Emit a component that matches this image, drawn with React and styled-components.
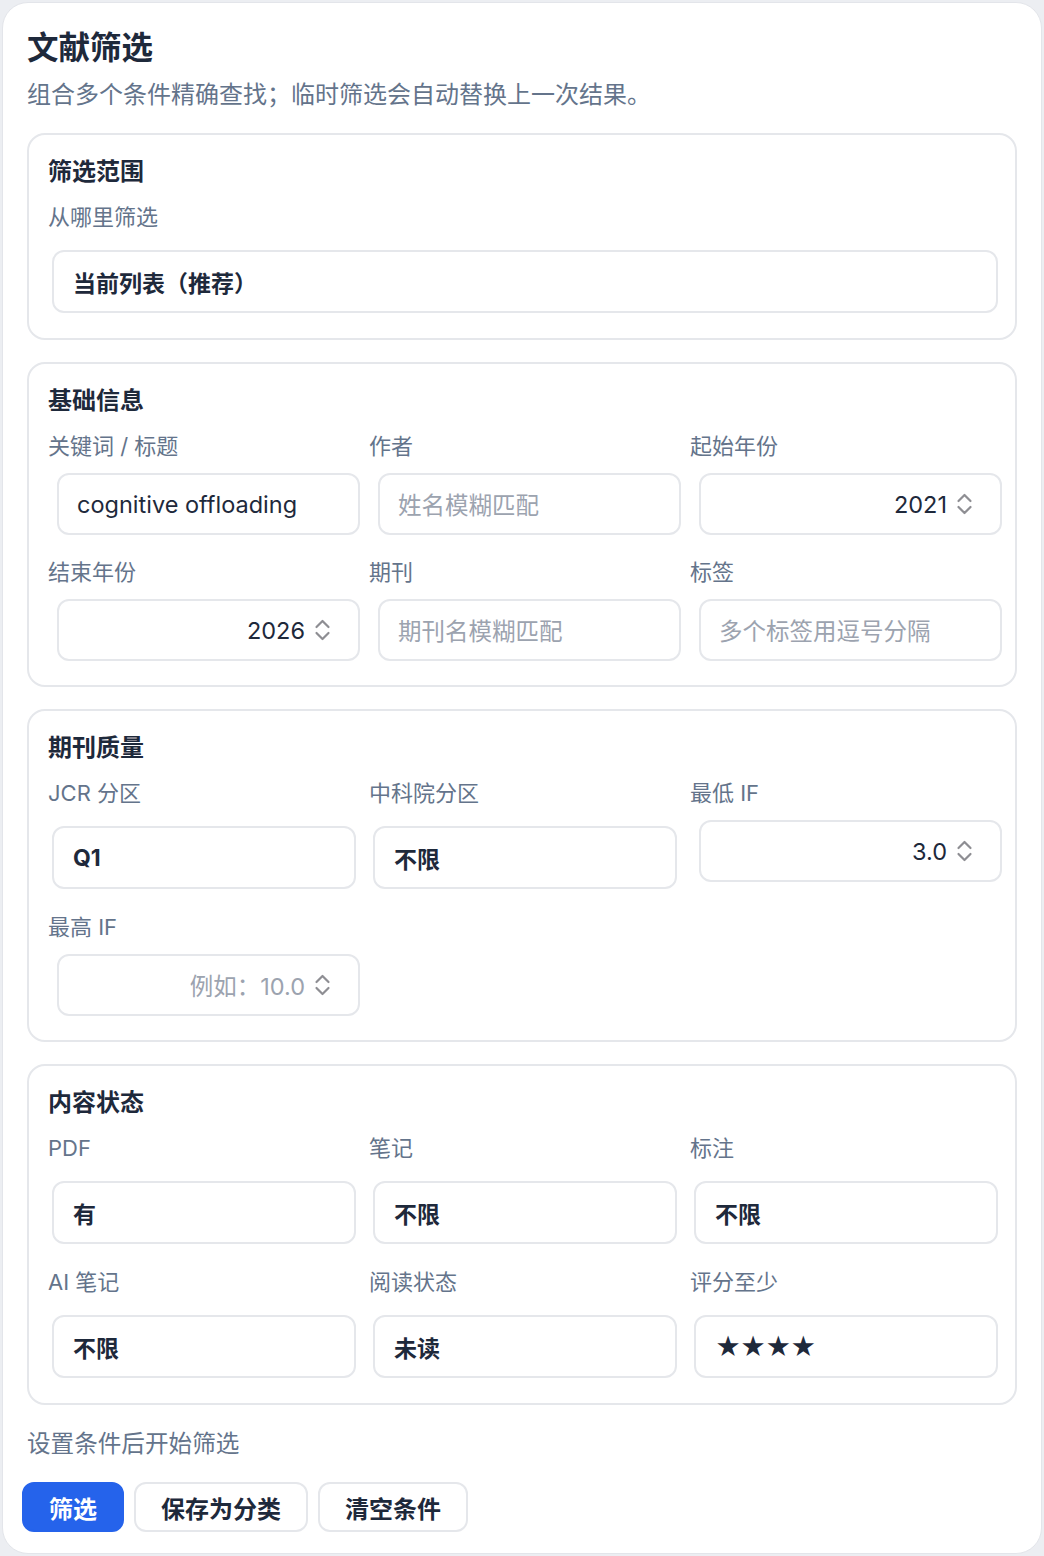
import styled, { createGlobalStyle } from 'styled-components';

const GlobalStyle = createGlobalStyle`
    html, body {
        margin: 0;
        padding: 0;
        background: #eceef2;
    }
    body {
        font-family: "Inter", "Noto Sans CJK SC", sans-serif;
        color: #1e293b;
    }
    * {
        box-sizing: border-box;
    }
`;

const Card = styled.div`
    margin: 2px;
    background: #fff;
    border: 1px solid #e3e5ea;
    border-radius: 26px;
    padding: 25px 24px 21px 24px;
`;

const Title = styled.h1`
    margin: 0;
    font-size: 31.5px;
    line-height: 40px;
    font-weight: 700;
    color: #1e293b;
`;

const Subtitle = styled.p`
    margin: 10px 0 21px;
    font-size: 24px;
    line-height: 34px;
    color: #64748b;
`;

const Section = styled.section`
    border: 2px solid #e5e7eb;
    border-radius: 18px;
    padding: 20px 19px 24px;
    & + & {
        margin-top: 22px;
    }
    h2 {
        margin: 0 0 13px;
        font-size: 24px;
        line-height: 34px;
        font-weight: 700;
        color: #1e293b;
    }
`;

const FieldGrid = styled.div`
    display: grid;
    grid-template-columns: repeat(${p => p.cols || 3}, 1fr);
    column-gap: 15px;
    row-gap: 22px;
    align-items: start;
`;

const Field = styled.div`
    display: flex;
    flex-direction: column;
    gap: 12px;
    label {
        font-size: 22px;
        line-height: 30px;
        color: #64748b;
    }
`;

const SelectBox = styled.div`
    margin: 6px 0 1px 4px;
    width: calc(100% - 2px);
    height: 63px;
    border: 2px solid #e5e7eb;
    border-radius: 12px;
    padding: 0 19px;
    display: flex;
    align-items: center;
    font-size: ${p => (p.stars ? '25px' : '23px')};
    font-weight: 700;
    color: #1e293b;
    letter-spacing: ${p => (p.stars ? '-1px' : '0')};
`;

const InputBox = styled.div`
    margin-left: 9px;
    width: calc(100% - 3px);
    height: 62px;
    border: 2px solid #e5e7eb;
    border-radius: 12px;
    padding: 0 ${p => (p.number ? '27px' : '18px')} 0 18px;
    display: flex;
    align-items: center;
    justify-content: ${p => (p.number ? 'flex-end' : 'flex-start')};
    gap: 9px;
    font-size: 23.5px;
    color: ${p => (p.empty ? '#9ca3af' : '#1e293b')};
    svg {
        flex: none;
    }
`;

const Hint = styled.p`
    margin: 22px 0 21px;
    font-size: 23.6px;
    line-height: 34px;
    color: #64748b;
`;

const Actions = styled.div`
    display: flex;
    gap: 10px;
    margin-left: -5px;
`;

const Button = styled.button`
    height: 50px;
    padding: 0 25px;
    border-radius: 12px;
    font-family: inherit;
    font-size: 24px;
    font-weight: 700;
    border: 2px solid ${p => (p.primary ? '#2563eb' : '#e5e7eb')};
    background: ${p => (p.primary ? '#2563eb' : '#fff')};
    color: ${p => (p.primary ? '#fff' : '#1e293b')};
    cursor: pointer;
`;

const Stepper = () => (
    <svg width="17" height="26" viewBox="0 0 17 26" fill="none" stroke="#8e8e93" strokeWidth="2.2" strokeLinecap="round" strokeLinejoin="round">
        <path d="M2.5 10 L8.5 4 L14.5 10" />
        <path d="M2.5 16 L8.5 22 L14.5 16" />
    </svg>
);

const TextField = ({ label, value, placeholder }) => (
    <Field>
        <label>{label}</label>
        <InputBox empty={!value}>{value || placeholder}</InputBox>
    </Field>
);

const NumberField = ({ label, value, placeholder }) => (
    <Field>
        <label>{label}</label>
        <InputBox number empty={!value}>
            <span>{value || placeholder}</span>
            <Stepper />
        </InputBox>
    </Field>
);

const SelectField = ({ label, value, stars }) => (
    <Field>
        <label>{label}</label>
        <SelectBox stars={stars}>{value}</SelectBox>
    </Field>
);

const App = () => {
    return (
        <>
            <GlobalStyle />
            <Card>
                <Title>文献筛选</Title>
                <Subtitle>组合多个条件精确查找；临时筛选会自动替换上一次结果。</Subtitle>

                <Section>
                    <h2>筛选范围</h2>
                    <FieldGrid cols={1}>
                        <SelectField label="从哪里筛选" value="当前列表（推荐）" />
                    </FieldGrid>
                </Section>

                <Section>
                    <h2>基础信息</h2>
                    <FieldGrid>
                        <TextField label="关键词 / 标题" value="cognitive offloading" />
                        <TextField label="作者" placeholder="姓名模糊匹配" />
                        <NumberField label="起始年份" value="2021" />
                        <NumberField label="结束年份" value="2026" />
                        <TextField label="期刊" placeholder="期刊名模糊匹配" />
                        <TextField label="标签" placeholder="多个标签用逗号分隔" />
                    </FieldGrid>
                </Section>

                <Section>
                    <h2>期刊质量</h2>
                    <FieldGrid>
                        <SelectField label="JCR 分区" value="Q1" />
                        <SelectField label="中科院分区" value="不限" />
                        <NumberField label="最低 IF" value="3.0" />
                        <NumberField label="最高 IF" placeholder="例如：10.0" />
                    </FieldGrid>
                </Section>

                <Section>
                    <h2>内容状态</h2>
                    <FieldGrid>
                        <SelectField label="PDF" value="有" />
                        <SelectField label="笔记" value="不限" />
                        <SelectField label="标注" value="不限" />
                        <SelectField label="AI 笔记" value="不限" />
                        <SelectField label="阅读状态" value="未读" />
                        <SelectField label="评分至少" value="★★★★" stars />
                    </FieldGrid>
                </Section>

                <Hint>设置条件后开始筛选</Hint>
                <Actions>
                    <Button primary>筛选</Button>
                    <Button>保存为分类</Button>
                    <Button>清空条件</Button>
                </Actions>
            </Card>
        </>
    );
};

export default App;
